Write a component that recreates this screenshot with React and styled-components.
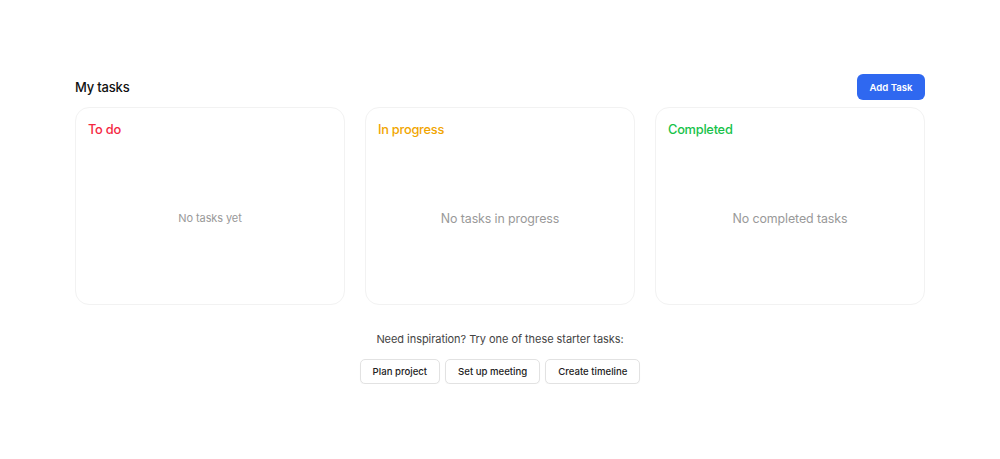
import React from "react";
import styled, { createGlobalStyle } from "styled-components";

const GlobalStyle = createGlobalStyle`
  body {
    margin: 0;
    background: #ffffff;
    font-family: Inter, "Noto Sans", sans-serif;
    -webkit-font-smoothing: antialiased;
  }
`

const Page = styled.div`
  width: 850px;
  margin: 0 auto;
  padding-top: 74px;
`
const Header = styled.div`
  display: flex;
  align-items: center;
  justify-content: space-between;
  height: 26px;
`
const Title = styled.h2`
  margin: 0;
  font-size: 13px;
  font-weight: 500;
  letter-spacing: -0.2px;
  color: #111;
`
const AddButton = styled.button`
  height: 26px;
  width: 68px;
  border: none;
  border-radius: 6px;
  background: #2f68f0;
  color: #fff;
  font-family: inherit;
  font-size: 9.6px;
  font-weight: 600;
  cursor: pointer;
`
const Columns = styled.div`
  display: grid;
  grid-template-columns: repeat(3, 1fr);
  gap: 20px;
  margin-top: 7px;
`
const Column = styled.div`
  height: 198px;
  box-sizing: border-box;
  border: 1px solid #f2f2f2;
  border-radius: 14px;
  padding: 14px 12px;
  display: flex;
  flex-direction: column;
`
const ColumnTitle = styled.div`
  font-size: 12.8px;
  font-weight: 500;
  letter-spacing: -0.25px;
  color: ${p => p.color};
  line-height: 16px;
`
const Empty = styled.div`
  flex: 1;
  display: flex;
  align-items: center;
  justify-content: center;
  padding-top: 8px;
  font-size: ${p => p.size}px;
  letter-spacing: -0.1px;
  color: #999;
`
const Starter = styled.div`
  margin-top: 27px;
  display: flex;
  flex-direction: column;
  align-items: center;
  gap: 13px;
`
const StarterText = styled.p`
  margin: 0;
  font-size: 11px;
  letter-spacing: -0.05px;
  color: #444;
`
const StarterRow = styled.div`
  display: flex;
  gap: 5px;
`
const StarterButton = styled.button`
  height: 25px;
  padding: 0 12px;
  background: #fff;
  border: 1px solid #e2e2e2;
  border-radius: 5px;
  font-family: inherit;
  font-size: 9.6px;
  font-weight: 500;
  color: #222;
  box-shadow: 0 1px 1px rgba(0,0,0,0.04);
  cursor: pointer;
`

const columns = [
  { title: 'To do', color: '#f4283f', empty: 'No tasks yet', size: 11 },
  { title: 'In progress', color: '#f1a500', empty: 'No tasks in progress', size: 12.4 },
  { title: 'Completed', color: '#17c24a', empty: 'No completed tasks', size: 12.4 }
]

const starters = ['Plan project', 'Set up meeting', 'Create timeline']

const App = () => {
  return (
    <>
      <GlobalStyle />
      <Page>
        <Header>
          <Title>My tasks</Title>
          <AddButton>Add Task</AddButton>
        </Header>
        <Columns>
          {
            columns.map(col => (
              <Column key={col.title}>
                <ColumnTitle color={col.color}>{col.title}</ColumnTitle>
                <Empty size={col.size}>{col.empty}</Empty>
              </Column>
            ))
          }
        </Columns>
        <Starter>
          <StarterText>Need inspiration? Try one of these starter tasks:</StarterText>
          <StarterRow>
            {
              starters.map(item => (
                <StarterButton key={item}>{item}</StarterButton>
              ))
            }
          </StarterRow>
        </Starter>
      </Page>
    </>
  )
};

export default App;
